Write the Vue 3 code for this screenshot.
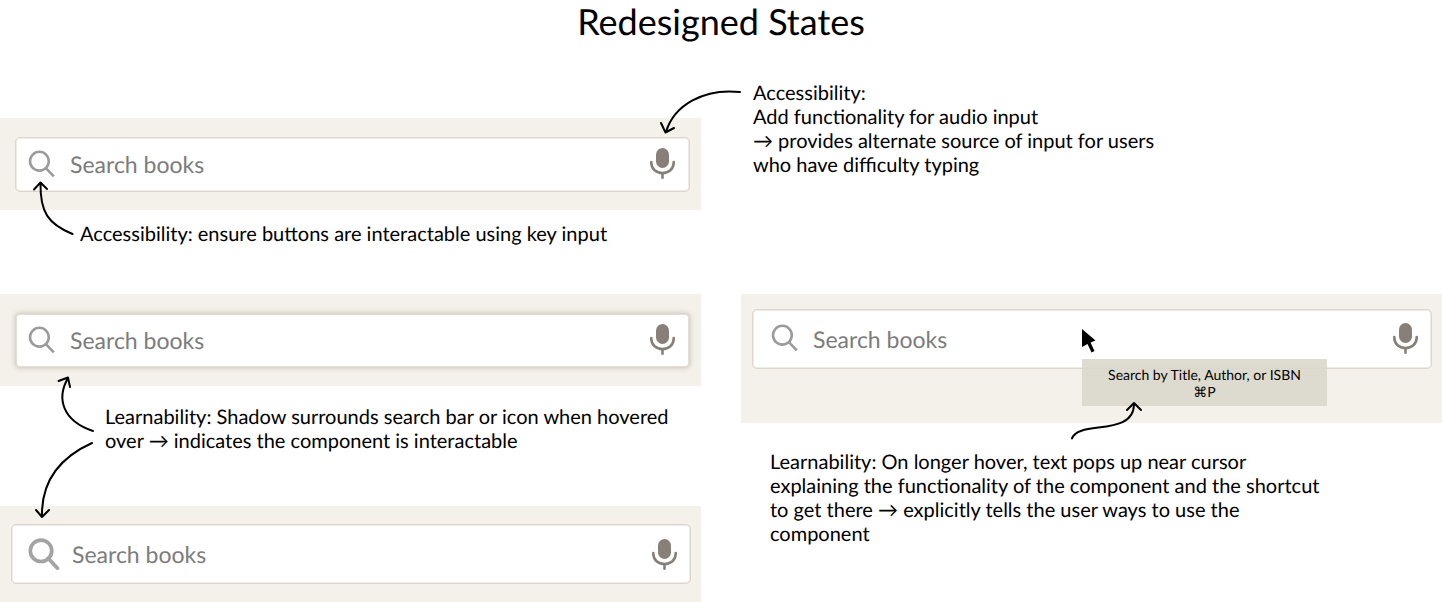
<script setup>
import { h } from 'vue'

const SearchBar = (props) =>
  h('form', { class: ['bar', props.variant], role: 'search', onSubmit: (e) => e.preventDefault() }, [
    h('button', { type: 'submit', class: 'icon-button lens', 'aria-label': 'Search' }, [
      h('svg', { viewBox: '0 0 28 28' }, [
        h('circle', { cx: 11.4, cy: 11.2, r: 9.4 }),
        h('path', { d: 'M17.6 17.8 25.8 26.4' }),
      ]),
    ]),
    h('input', { type: 'text', placeholder: 'Search books', 'aria-label': 'Search books' }),
    h('button', { type: 'button', class: 'icon-button mic', 'aria-label': 'Search by voice' }, [
      h('svg', { viewBox: '0 0 25 31' }, [
        h('rect', { x: 6, y: 0, width: 13, height: 20, rx: 6.5 }),
        h('path', { d: 'M1.3 14v.8c0 6.2 5 10.2 11.2 10.2s11.2-4 11.2-10.2V14M12.5 25v4.7' }),
      ]),
    ]),
  ])
SearchBar.props = ['variant']
</script>

<template>
  <main class="page">
    <h1>Redesigned States</h1>

    <div class="board">
      <section class="cell voice-left">
        <div class="panel"><SearchBar variant="plain" /></div>
        <p class="note keys">
          Accessibility: ensure buttons are interactable using key input
          <svg class="arrow arrow-keys" viewBox="0 0 50 60" aria-hidden="true">
            <path d="M42.500 54C18 44 10 32 10.500 3M4 9.500 10.500 2.500 17 9" />
          </svg>
        </p>
      </section>

      <section class="cell">
        <p class="note voice">
          Accessibility:<br />Add functionality for audio input<br />→ provides alternate source of input for users<br />who have difficulty typing
          <svg class="arrow arrow-voice" viewBox="0 0 90 60" aria-hidden="true">
            <path d="M80 12C44 8 14 25 6 52M1 43 5.500 52.500 14 48" />
          </svg>
        </p>
      </section>

      <section class="cell">
        <div class="panel"><SearchBar variant="glow" /></div>
        <p class="note hover">
          Learnability: Shadow surrounds search bar or icon when hovered<br />over → indicates the component is interactable
          <svg class="arrow arrow-up" viewBox="0 0 50 70" aria-hidden="true">
            <path d="M39 56C9 46 2 24 14 3M4.500 6 14 2.500 16 12" />
          </svg>
          <svg class="arrow arrow-down" viewBox="0 0 70 90" aria-hidden="true">
            <path d="M57 4C26 18 6 42 7 78M1 71 7 78 14 71" />
          </svg>
        </p>
        <div class="panel lower"><SearchBar variant="large" /></div>
      </section>

      <section class="cell">
        <div class="panel tall">
          <SearchBar variant="medium" />
          <div class="hint">
            <svg class="cursor" viewBox="0 0 14 24" aria-hidden="true">
              <path d="M0 0 13.500 11.500 8.500 13.500 12.500 22 9.500 23.500 5.500 15 0 18Z" />
            </svg>
            <span role="tooltip">Search by Title, Author, or ISBN<br />⌘P</span>
            <svg class="arrow arrow-hint" viewBox="0 0 72 42" aria-hidden="true">
              <path d="M2 37.500C8 19 64 36 64 3M57 9 64 2 71 9" />
            </svg>
          </div>
        </div>
        <p class="note learn">
          Learnability: On longer hover, text pops up near cursor<br />explaining the functionality of the component and the shortcut<br />to get there → explicitly tells the user ways to use the<br />component
        </p>
      </section>
    </div>
  </main>
</template>

<style>
body {
  background: #fff;
}
</style>

<style scoped>
.page {
  font-family: Lato, sans-serif;
  color: #000;
  overflow: hidden;
  text-rendering: geometricPrecision;
}
h1 {
  margin: 0;
  padding-bottom: 4px;
  font-size: 36px;
  line-height: 42px;
  font-weight: 400;
  text-align: center;
}
.board {
  display: grid;
  grid-template-columns: 1fr 1fr;
  grid-template-rows: 248px auto;
  column-gap: 40px;
}
.voice-left {
  padding-top: 72px;
}
.panel {
  padding: 19px 11px 18px 15px;
  background: #f4f1ea;
}
.panel.lower {
  padding: 18px 10px 18px 11px;
}
.panel.tall {
  position: relative;
  padding: 15px 10px 54px 11px;
}
.bar {
  display: flex;
  align-items: center;
  box-sizing: border-box;
  height: 55px;
  padding: 0 14px 2px 12px;
  background: #fff;
  border: 1px solid #dcd6cb;
  border-radius: 5px;
  box-shadow: inset 0 0 0 1px #efece5;
}
.bar.glow {
  box-shadow: inset 0 0 0 1px #e3ded5, 0 0 4px 1px #d6d2c8;
}
.bar.large,
.bar.medium {
  height: 60px;
}
.bar.large {
  padding: 0 13px 0 16px;
}
.bar.medium {
  padding: 0 13px 2px 18px;
}
.bar :deep(input) {
  flex: 1;
  min-width: 0;
  margin: 0 0 0 14px;
  padding: 0;
  border: 0;
  outline: 0;
  background: none;
  font: 23px/32px Lato, sans-serif;
  text-rendering: inherit;
  color: #333;
}
.bar.large :deep(input) {
  margin-left: 12px;
}
.bar.medium :deep(input) {
  padding-top: 2px;
}
.bar :deep(input::placeholder) {
  color: #7c7c7c;
  opacity: 1;
}
.bar :deep(.icon-button) {
  flex: none;
  padding: 0;
  border: 0;
  background: none;
  cursor: pointer;
}
.bar :deep(svg) {
  display: block;
  width: 100%;
  height: 100%;
}
.bar :deep(.lens) {
  width: 28px;
  height: 28px;
}
.bar :deep(.lens svg) {
  fill: none;
  stroke: #9b9b9b;
  stroke-width: 2.6;
}
.bar.large :deep(.lens) {
  width: 32px;
  height: 32px;
}
.bar.large :deep(.lens svg) {
  stroke: #a3a3a3;
  stroke-width: 3.2;
  stroke-linecap: round;
}
.bar :deep(.mic) {
  width: 25px;
  height: 31px;
}
.bar :deep(.mic rect) {
  fill: #888078;
}
.bar :deep(.mic path) {
  fill: none;
  stroke: #888078;
  stroke-width: 2.6;
  stroke-linecap: round;
}
.note {
  position: relative;
  margin: 0;
  font-size: 20px;
  line-height: 24px;
  white-space: nowrap;
}
.keys {
  padding: 12px 0 0 80px;
}
.voice {
  padding: 35px 0 0 12px;
}
.hover {
  padding: 19px 0 53px 105px;
}
.learn {
  padding: 27px 0 0 29px;
}
.arrow {
  position: absolute;
  fill: none;
  stroke: #000;
  stroke-width: 2;
  stroke-linecap: round;
  stroke-linejoin: round;
}
.arrow-keys {
  left: 30px;
  top: -30px;
  width: 50px;
  height: 60px;
}
.arrow-voice {
  left: -81px;
  top: 34px;
  width: 90px;
  height: 60px;
}
.arrow-up {
  left: 54px;
  top: -11px;
  width: 50px;
  height: 70px;
}
.arrow-down {
  left: 35px;
  top: 53px;
  width: 70px;
  height: 90px;
}
.hint {
  position: absolute;
  left: 341px;
  top: 65px;
  width: 245px;
  padding: 7px 0 6px;
  background: rgba(218, 215, 203, 0.88);
  font-size: 14px;
  line-height: 17px;
  text-align: center;
}
.cursor {
  position: absolute;
  left: 0;
  top: -30px;
  width: 14px;
  height: 24px;
}
.arrow-hint {
  left: -12px;
  top: 42px;
  width: 72px;
  height: 42px;
}
</style>
